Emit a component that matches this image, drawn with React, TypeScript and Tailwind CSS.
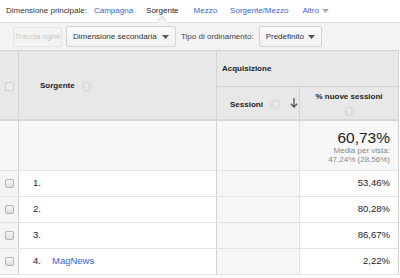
import React from 'react';

const Help = ({ className = '' }: { className?: string }) => (
  <span className={`inline-flex items-center justify-center w-[11px] h-[11px] rounded-full bg-[#dedede] text-white text-[7px] font-bold leading-none ${className}`}>?</span>
);

const Caret = ({ color = '#555' }: { color?: string }) => (
  <svg width="7" height="4" viewBox="0 0 7 4" className="inline-block shrink-0">
    <path d="M0 0h7L3.5 4z" fill={color} />
  </svg>
);

const Check = () => (
  <span className="block w-[9px] h-[9px] border border-[#b4b4b4] rounded-[2px] bg-gradient-to-b from-[#f6f6f6] to-[#dedede]" />
);

const rows = [
  { n: '1.', name: '', pct: '53,46%' },
  { n: '2.', name: '', pct: '80,28%' },
  { n: '3.', name: '', pct: '86,67%' },
  { n: '4.', name: 'MagNews', pct: '2,22%' },
];

export default function App() {
  return (
    <div className="w-[400px] h-[278px] overflow-hidden bg-white text-[8px] text-[#222] whitespace-nowrap font-['Liberation_Sans',Arial,sans-serif]">
      {/* primary dimension */}
      <div className="h-[22px] flex items-center pl-[6px]">
        <span className="text-[#333]">Dimensione principale:</span>
        <span className="text-[#3366cc] ml-[7px]">Campagna</span>
        <span className="relative text-[#222] ml-[13px]">
          Sorgente
          <span className="absolute left-1/2 -translate-x-1/2 top-[12px] w-[7px] h-[7px] rotate-45 bg-[#f3f3f3] border-l border-t border-[#dadada]" />
        </span>
        <span className="text-[#3366cc] ml-[15px]">Mezzo</span>
        <span className="text-[#3366cc] ml-[13px]">Sorgente/Mezzo</span>
        <span className="text-[#3366cc] ml-[14px] flex items-center gap-[3px]">Altro <Caret color="#aaa" /></span>
      </div>

      {/* toolbar */}
      <div className="h-[28px] bg-[#f3f3f3] border-t border-[#e2e2e2] flex items-center pl-[13px]">
        <span className="h-[20px] w-[49px] flex items-center justify-center border border-[#e4e4e4] rounded-[2px] text-[#c8c8c8]">Traccia righe</span>
        <span className="h-[21px] w-[110px] ml-[4px] px-[6px] flex items-center justify-between border border-[#d4d4d4] rounded-[2px] bg-gradient-to-b from-[#fbfbfb] to-[#f1f1f1] text-[#333]">
          Dimensione secondaria <Caret />
        </span>
        <span className="text-[#444] ml-[5px]">Tipo di ordinamento:</span>
        <span className="h-[21px] w-[63px] ml-[5px] px-[6px] flex items-center justify-between border border-[#d4d4d4] rounded-[2px] bg-gradient-to-b from-[#fbfbfb] to-[#f1f1f1] text-[#333]">
          Predefinito <Caret />
        </span>
      </div>

      {/* table */}
      <div className="w-[399px] border-t border-[#d2d2d2] border-r">
        {/* header */}
        <div className="flex h-[70px] bg-[#e8e8e8] border-b-2 border-[#d6d6d6]">
          <div className="w-[19px] border-r border-[#d2d2d2] flex items-center justify-center pt-[2px]">
            <span className="block w-[9px] h-[9px] border border-[#d0d0d0] bg-[#ebebeb]" />
          </div>
          <div className="w-[198px] border-r border-[#d2d2d2] flex items-center pl-[21px] pt-[2px] font-bold text-[#222]">
            Sorgente <Help className="ml-[6px]" />
          </div>
          <div className="flex-1 flex flex-col">
            <div className="h-[36px] border-b border-[#d2d2d2] flex items-center pl-[5px] font-bold">Acquisizione</div>
            <div className="flex flex-1">
              <div className="w-[83px] border-r border-[#d2d2d2] flex items-center pl-[13px] pt-[3px] font-bold">
                Sessioni <Help className="ml-[7px]" />
                <svg width="8" height="10" viewBox="0 0 8 10" className="ml-[9px] -mt-[3px]">
                  <path d="M4 0v9M0.8 5.8L4 9l3.2-3.2" stroke="#555" strokeWidth="1.3" fill="none" />
                </svg>
              </div>
              <div className="flex-1 flex flex-col items-center pt-[5px] font-bold leading-[10px]">
                <span>% nuove sessioni</span>
                <Help className="mt-[4px]" />
              </div>
            </div>
          </div>
        </div>

        {/* summary */}
        <div className="flex h-[50px] bg-[#f7f7f7] border-b border-[#e2e2e2]">
          <div className="w-[19px] border-r border-[#d2d2d2]" />
          <div className="w-[198px] border-r border-[#d2d2d2]" />
          <div className="w-[83px] border-r border-[#e2e2e2]" />
          <div className="flex-1 flex flex-col items-end pr-[8px] pt-[9px]">
            <span className="text-[15.5px] leading-[16px] text-[#222]">60,73%</span>
            <span className="text-[8px] leading-[9px] text-[#888]">Media per vista:</span>
            <span className="text-[8px] leading-[9px] text-[#888]">47,24% (28,56%)</span>
          </div>
        </div>

        {rows.map((r) => (
          <div key={r.n} className="flex h-[26px] border-b border-[#e2e2e2] items-stretch text-[9.5px]">
            <div className="w-[19px] bg-[#f5f5f5] border-r border-[#d2d2d2] flex items-center justify-center">
              <Check />
            </div>
            <div className="w-[198px] border-r border-[#d2d2d2] flex items-center pl-[14px]">
              <span className="w-[19px]">{r.n}</span>
              <span className="text-[#3366cc]">{r.name}</span>
            </div>
            <div className="w-[83px] bg-[#f7f7f7] border-r border-[#e2e2e2]" />
            <div className="flex-1 flex items-center justify-end pr-[8px] text-[#222]">{r.pct}</div>
          </div>
        ))}
      </div>
    </div>
  );
}
